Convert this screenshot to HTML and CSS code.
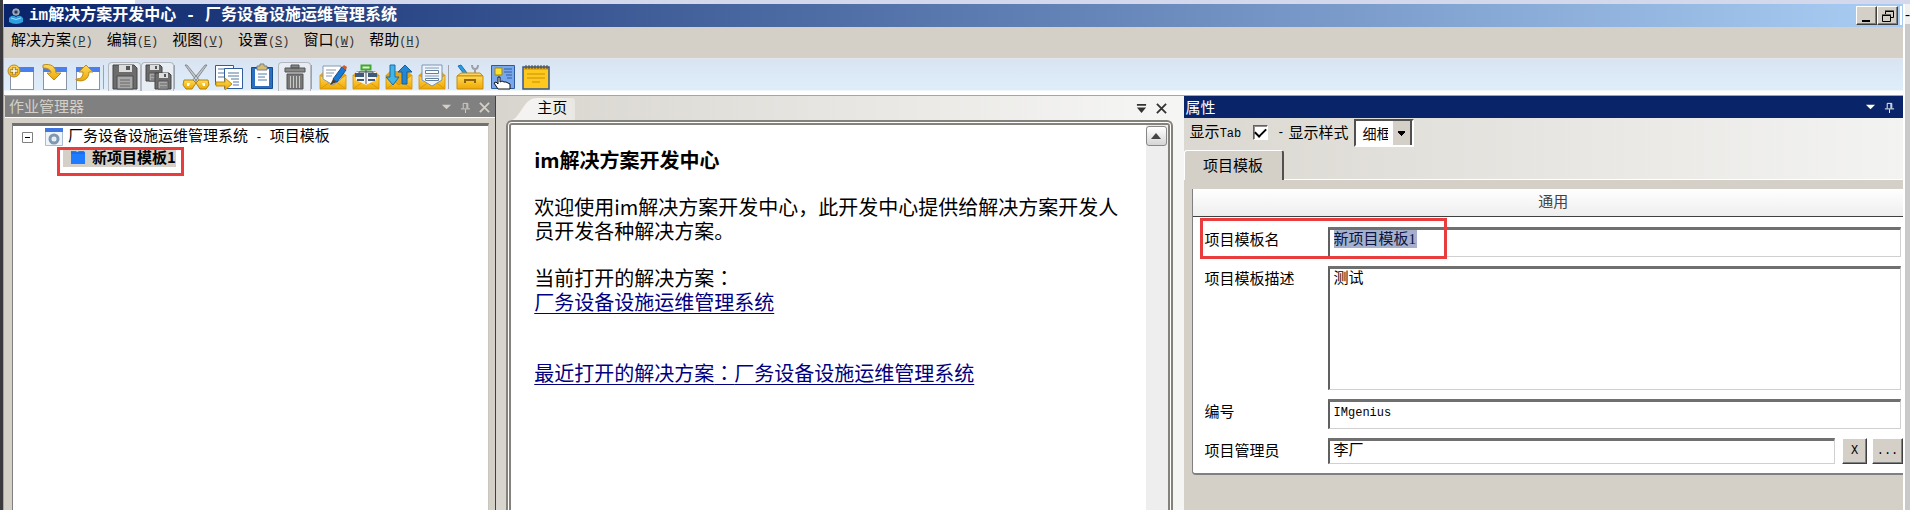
FILE: index.html
```html
<!DOCTYPE html>
<html lang="zh-CN">
<head>
<meta charset="utf-8">
<title>im解决方案开发中心 - 厂务设备设施运维管理系统</title>
<link rel="stylesheet" href="styles.css">
</head>
<body>
<svg width="0" height="0" class="defs" aria-hidden="true">
  <defs>
    <linearGradient id="gold" x1="0" y1="0" x2="0" y2="1"><stop offset="0" stop-color="#ffd95a"/><stop offset="1" stop-color="#f0a800"/></linearGradient>
    <symbol id="win" viewBox="0 0 28 26"><rect x="3.500" y="4.500" width="23" height="21" fill="#fff" stroke="#8a94a6"/><path d="M3 3h24v5H3z" fill="#4a80ee"/></symbol>
    <symbol id="env" viewBox="0 0 28 26"><path d="M1 11l4-4h18l4 4v12H1z" fill="#e8a414"/><path d="M1 11l13 10 13-10v14H1z" fill="url(#gold)" stroke="#d18f00" stroke-width=".8"/><path d="M1 25l10-7M27 25l-10-7" stroke="#d89b10" fill="none"/></symbol>
  </defs>
</svg>
<div class="screen">
  <div class="backdrop"></div>
  <div class="window">
    <header class="titlebar">
      <svg class="app-icon" viewBox="0 0 16 16"><circle cx="8" cy="4" r="2.600" fill="none" stroke="#a9b3c0" stroke-width="2"/><path d="M8 0v8M4 4h8M5 1l6 6M11 1L5 7" stroke="#8b95a3" stroke-width="1"/><circle cx="8" cy="4" r="1.500" fill="#26365c"/><path d="M1 10q3-4 7-1 4-3 7 1v4q-7 4-14 0z" fill="#2e9fe0"/><path d="M3 10q5 3 10 0" stroke="#9fdcff" fill="none"/></svg>
      <h1>im解决方案开发中心 - 厂务设备设施运维管理系统</h1>
      <div class="caption-buttons">
        <button class="cap" aria-label="最小化"><svg viewBox="0 0 16 14"><path d="M3 12h8" stroke="#000" stroke-width="2"/></svg></button>
        <button class="cap" aria-label="还原"><svg viewBox="0 0 16 14" fill="none" stroke="#000"><path d="M5.500 5V2.500h8v6H11M5 2h9M2.500 6.500h8v6h-8zM2 6h9"/></svg></button>
      </div>
    </header>
    <nav class="menubar">
      <button>解决方案<span class="en">(<u>P</u>)</span></button><button>编辑<span class="en">(<u>E</u>)</span></button><button>视图<span class="en">(<u>V</u>)</span></button><button>设置<span class="en">(<u>S</u>)</span></button><button>窗口<span class="en">(<u>W</u>)</span></button><button>帮助<span class="en">(<u>H</u>)</span></button>
    </nav>
    <div class="toolbar" role="toolbar">
      <button aria-label="新建"><svg viewBox="0 0 28 26"><use href="#win"/><circle cx="7" cy="7" r="6" fill="url(#gold)" stroke="#b98b1c"/><path d="M7 3v8M3 7h8" stroke="#8d6710" stroke-width="3"/><path d="M7 3.500v7M3.500 7h7" stroke="#fff" stroke-width="1.500"/></svg></button>
      <button aria-label="打开"><svg viewBox="0 0 28 26"><use href="#win"/><path d="M3 1c8-2 13 2 13 8h5l-7 7-7-7h4c0-3-3-5-8-5z" fill="url(#gold)" stroke="#b98b1c"/></svg></button>
      <button aria-label="导出"><svg viewBox="0 0 28 26"><use href="#win"/><path d="M3 15c6 0 7-3 7-7H6l7-7 7 7h-4c0 6-5 11-13 8z" fill="url(#gold)" stroke="#b98b1c"/></svg></button>
      <i class="sep"></i>
      <button class="idle" aria-label="保存"><svg viewBox="0 0 28 26"><path d="M2 1h21l3 3v21H2z" fill="#6c6c6c" stroke="#454545"/><path d="M8 1h13v7H8z" fill="#ddd"/><path d="M15 2h4v4h-4z" fill="#555"/><path d="M6 12h16v13H6z" fill="#a8a8a8" stroke="#4c4c4c"/><path d="M9 16h10M9 19h10M9 22h10" stroke="#666"/></svg></button>
      <button class="idle" aria-label="全部保存"><svg viewBox="0 0 28 26"><g id="disk"><path d="M2 1h14l2 2v14H2z" fill="#6c6c6c" stroke="#454545"/><path d="M6 1h9v5H6z" fill="#ddd"/><path d="M11 2h2v3h-2z" fill="#555"/><path d="M5 9h10v8H5z" fill="#a8a8a8" stroke="#555"/><path d="M7 12h7M7 15h7" stroke="#666"/></g><use href="#disk" x="9" y="8"/></svg></button>
      <i class="sep"></i>
      <button aria-label="剪切"><svg viewBox="0 0 28 26"><path d="M3 1l2 0 13 16-2 2zM25 1l-2 0L10 17l2 2z" fill="#c4c8cc" stroke="#75797d" stroke-width=".8"/><path d="M2 16h9l3 3-4 6H4l-3-4zM26 16h-9l-3 3 4 6h6l3-4z" fill="url(#gold)" stroke="#b28407"/><path d="M5 19h3l-1 3H5zM23 19h-3l1 3h2z" fill="#fff"/></svg></button>
      <button aria-label="复制"><svg viewBox="0 0 28 26"><path d="M.5 1.500h18v19H.5z" fill="#fff" stroke="#315d9c"/><path d="M3 5h11M3 9h6M3 13h6" stroke="#56779f"/><path d="M9.500 4.500h18v20h-18z" fill="#fff" stroke="#315d9c"/><path d="M13 9h11M13 12h11M16 15h8M18 18h6M18 21h6" stroke="#56779f"/><path d="M1 18h9v-4l7 6-7 6v-4H1z" fill="url(#gold)" stroke="#c08f08"/></svg></button>
      <button aria-label="粘贴"><svg viewBox="0 0 28 26"><path d="M3.500 3.500h21v21h-21z" fill="#2c6fc0" stroke="#174a8c"/><path d="M7 5h14v17H7z" fill="#fff"/><path d="M9 2h3V0h4v2h3v4H9z" fill="#d7bd71" stroke="#77808d"/><path d="M10 10h9M10 13h7M10 16h9" stroke="#527aa9"/></svg></button>
      <button class="idle" aria-label="删除"><svg viewBox="0 0 28 26"><path d="M4 4h20v4H4zM10 1h8v3h-8z" fill="#888" stroke="#555"/><path d="M6 10h16v15H6z" fill="#777" stroke="#555"/><path d="M9.500 12v12M12.500 12v12M15.500 12v12M18.500 12v12" stroke="#c9c9c9"/></svg></button>
      <i class="sep"></i>
      <button aria-label="编辑"><svg viewBox="0 0 28 26"><use href="#env"/><path d="M4 2h18v13l-8 6-10-6z" fill="#fff" stroke="#8799ae"/><path d="M7 6h10M7 9h8M7 12h6" stroke="#8799ae"/><path d="M23 3l4 3-9 12-4-3z" fill="#1978d4" stroke="#145191"/><path d="M14 15l4 3-7 3z" fill="#473c34"/><path d="M23 3l4 3 1-3-3-2z" fill="#d95a25"/></svg></button>
      <button aria-label="结构"><svg viewBox="0 0 28 26"><use href="#env"/><path d="M4 8h20v8l-10 5-10-5z" fill="#f4f6f8"/><path d="M9.500 1.500h9v4h-9z" fill="#dff7d5" stroke="#42a82b" stroke-width="2"/><path d="M14 6v14M7 10V8h14v2" stroke="#4c5560" fill="none"/><path d="M3 9h9v4H3zM16 9h9v4h-9z" fill="#41597a"/><path d="M5 15h7v2H5zM16 15h7v2h-7z" fill="#41597a"/></svg></button>
      <button aria-label="同步"><svg viewBox="0 0 28 26"><use href="#env"/><path d="M5 1h5v12h4l-6 8-7-8h4z" fill="#43b4e7" stroke="#176da8"/><path d="M17 20V8h-4l7-7 7 7h-5v12z" fill="#2487d2" stroke="#145f9e"/></svg></button>
      <button aria-label="表单"><svg viewBox="0 0 28 26"><use href="#env"/><path d="M4 1h20v15l-10 6-10-6z" fill="#edf4fc" stroke="#7d95b1"/><path d="M7 4h14M7 12h14" stroke="#839bb6"/><path d="M7.500 6.500h13v3h-13zM7.500 14.500h13v2h-13z" fill="#fff" stroke="#65809f"/></svg></button>
      <i class="sep"></i>
      <button aria-label="工具箱"><svg viewBox="0 0 28 26"><path d="M2 2l3-1 6 8-3 1z" fill="#2c9be4" stroke="#1874b8"/><path d="M16 1q0 4 3 4t3-4M19 5v6" fill="none" stroke="#9aa0a5" stroke-width="2"/><path d="M1 12l4-3h19l3 3z" fill="#ffd35c" stroke="#c58d0d"/><path d="M1 12h26v13H1z" fill="url(#gold)" stroke="#c58d0d"/><path d="M8 15h12v4H8z" fill="#8d6710"/><path d="M10 17h8v2h-8z" fill="#ffc21f"/></svg></button>
      <button aria-label="名片"><svg viewBox="0 0 28 26"><path d="M2.500 1.500h23v23h-23z" fill="#78a7ee" stroke="#315a9c"/><path d="M6 4h7v7H6z" fill="#ffe227" stroke="#9c8916"/><path d="M15 5h8M15 8h8M17 11h6M18 14h5" stroke="#335b9c"/><path d="M9 25l-4-6 2-1 2 2v-7h2v5l2-1 2 1 2 0 2 1 2 1v5z" fill="#fff" stroke="#111"/></svg></button>
      <button aria-label="便笺"><svg viewBox="0 0 28 26"><path d="M1 3h26v22H1z" fill="#ffc81e" stroke="#35568c" stroke-width="1.500"/><path d="M2 4h24v2H2z" fill="#e2aa10"/><path d="M4 1v4M7 1v4M10 1v4M13 1v4M16 1v4M19 1v4M22 1v4M25 1v4" stroke="#5f4c1a"/><path d="M5 10h18M5 14h18M10 18h8" stroke="#c88f09"/></svg></button>
    </div>
    <main class="panes">
      <section class="pane jobs">
        <h2 class="pane-title">作业管理器
          <span class="tools"><svg viewBox="0 0 12 12"><path d="M1 3h10L6 8z"/></svg><svg viewBox="0 0 12 12"><path d="M3.500 7V1.500h5V7M7.500 2v5M1 7.500h10M6 8v4" fill="none" stroke="currentColor"/></svg><svg viewBox="0 0 12 12"><path d="M1 1l10 10M11 1L1 11" stroke="currentColor" stroke-width="2"/></svg></span>
        </h2>
        <div class="tree" role="tree">
          <div class="node" role="treeitem" aria-expanded="true">
            <svg class="expander" viewBox="0 0 11 11"><path d="M.5.500h10v10H.5z" fill="#fff" stroke="#808080"/><path d="M3 5.500h5" stroke="#000"/></svg>
            <svg class="sheet" viewBox="0 0 18 18"><path d="M.5.500h17v17H.5z" fill="#eef4fb" stroke="#a9bcd0"/><path d="M0 0h18v4H0z" fill="#3f76e0"/><circle cx="9" cy="11" r="4" fill="none" stroke="#8098ad" stroke-width="3"/><circle cx="9" cy="11" r="2" fill="#e3edf6"/></svg>
            <span>厂务设备设施运维管理系统<span class="en dash"> - </span>项目模板</span>
          </div>
          <div class="node child" role="treeitem">
            <span class="selected"><svg viewBox="0 0 16 16"><path d="M1 2h5l1 1 2-1h5l1 2v11H1z" fill="#1f7bff"/><path d="M1 4h14" stroke="#1763d6"/></svg>新项目模板1</span>
          </div>
        </div>
      </section>
      <section class="pane home">
        <div class="tabstrip">
          <svg class="slope" viewBox="0 0 22 22" preserveAspectRatio="none"><path d="M0 22C8 19 10 0 22 0v22z" fill="#f4f3f1"/></svg><button class="tab">主页</button>
          <span class="tools"><svg viewBox="0 0 12 12"><path d="M1 1h10v2H1zM1 5h10L6 11z"/></svg><svg viewBox="0 0 12 12"><path d="M1 1l10 10M11 1L1 11" stroke="currentColor" stroke-width="2"/></svg></span>
        </div>
        <div class="doc">
          <article>
            <h3>im解决方案开发中心</h3>
            <p>欢迎使用im解决方案开发中心，此开发中心提供给解决方案开发人员开发各种解决方案。</p>
            <p>当前打开的解决方案<span class="colon" lang="zh-TW">：</span><br><a href="#current">厂务设备设施运维管理系统</a></p>
            <p class="recent"><a href="#recent">最近打开的解决方案<span class="colon" lang="zh-TW">：</span>厂务设备设施运维管理系统</a></p>
          </article>
          <div class="scroll"><button aria-label="向上滚动"><svg viewBox="0 0 10 6"><path d="M0 6l5-6 5 6z" fill="#444"/></svg></button></div>
        </div>
      </section>
      <section class="pane props">
        <h2 class="pane-title active">属性
          <span class="tools"><svg viewBox="0 0 12 12"><path d="M1 3h10L6 8z"/></svg><svg viewBox="0 0 12 12"><path d="M3.500 7V1.500h5V7M7.500 2v5M1 7.500h10M6 8v4" fill="none" stroke="currentColor"/></svg></span>
        </h2>
        <div class="options">
          <label for="showtab">显示<span class="en">Tab</span></label><input type="checkbox" id="showtab" checked><span class="divider en">-</span>
          <label for="style">显示样式</label><select id="style"><option>细框</option></select>
        </div>
        <div class="prop-tabs"><button>项目模板</button></div>
        <div class="prop-body">
          <form class="card">
            <h3>通用</h3>
            <div class="field marked"><label for="name">项目模板名</label><div class="box"><input id="name" class="ghost" value="新项目模板1"></div></div>
            <div class="field tall"><label for="desc">项目模板描述</label><textarea id="desc" class="box">测试</textarea></div>
            <div class="field"><label for="code">编号</label><input id="code" class="box en" value="IMgenius"></div>
            <div class="field short"><label for="owner">项目管理员</label><input id="owner" class="box" value="李厂"><button type="button" class="clear en">X</button><button type="button" class="more en">...</button></div>
          </form>
        </div>
      </section>
    </main>
  </div>
  <aside class="outer-scroll"><span>-</span></aside>
</div>
</body>
</html>
```

FILE: styles.css
```css
*, *::after { box-sizing: border-box; }
body { margin: 0; font: 15px/20px "Liberation Serif", "Noto Sans CJK SC", sans-serif; color: #000; overflow: hidden; }
button, input, select, textarea { font: inherit; color: inherit; margin: 0; border-radius: 0; }
button { border: 0; background: none; padding: 0; }
h1, h2, h3, p { margin: 0; font-weight: 400; }
h1, h2, h3 { font-size: 15px; }
.en { font-family: "Liberation Mono", monospace; font-size: 12px; }
.defs { position: absolute; }
.screen { min-height: 100vh; display: grid; grid-template-columns: 4px minmax(0, 1fr) 7px; grid-template-rows: 4px minmax(0, 1fr); background: linear-gradient(90deg, #3a3a3e 3px, #a5a5a5 3px, #a5a5a5 4px, #d4d0c8 4px); }
.backdrop { grid-column: 1 / -1; background: linear-gradient(90deg, #3a3a3e 3px, #fff 3px, #fff 135px, #d3d8ec 135px); }
.window { grid-column: 2; display: flex; flex-direction: column; background: #d4d0c8; }
.outer-scroll { grid-column: 3; border-left: 2px solid #fff; background: #c9c9c9; overflow: hidden; }
.outer-scroll span { display: block; height: 20px; background: #f0f0f0; text-align: right; line-height: 20px; }

.titlebar { display: flex; align-items: center; height: 23px; padding: 0 1px 0 4px; gap: 5px; background: linear-gradient(90deg, #0a246a, #a6caf0 98%); color: #fff; }
.app-icon { width: 16px; height: 16px; }
.titlebar h1 { font: bold 16px/22px "Liberation Mono", "Noto Sans CJK SC", monospace; flex: 1; white-space: nowrap; }
.caption-buttons { display: flex; border-right: 2px solid #fff; padding-right: 2px; }
.cap { width: 21px; height: 19px; background: #d4d0c8; border: 1px solid; border-color: #fff #404040 #404040 #fff; box-shadow: inset -1px -1px #808080; display: grid; place-items: center; }
.cap svg { width: 16px; height: 14px; }

.menubar { display: flex; align-items: flex-start; gap: 14px; height: 32px; padding: 3px 7px; border-bottom: 1px solid #e4e6ec; }
.menubar button { white-space: nowrap; }
.menubar .en { color: #333; }
.toolbar { display: flex; height: 36px; padding: 3px 0 4px; background: linear-gradient(#d9e4f3, #dfedfa 31px, #fff 32px); }
.toolbar button { width: 33px; height: 29px; display: grid; place-items: center; }
.toolbar .idle { background: #e8edf3; border: 1px solid #b5b9bf; border-bottom: 0; border-radius: 4px 4px 0 0; }
.toolbar svg { width: 28px; height: 26px; overflow: visible; }
.sep { width: 5px; border-left: 1px solid #9ba3af; margin: 3px 0 2px; }

.panes { flex: 1; display: grid; grid-template-columns: 492fr 686fr 720fr; border-top: 1px solid #a5a5a5; }
.pane { min-width: 0; display: flex; flex-direction: column; }
.pane-title { display: flex; justify-content: space-between; align-items: center; height: 22px; padding: 1px 5px 0 4px; background: #808080; color: #d4d0c8; border-bottom: 1px solid #fff; }
.pane-title.active { background: #0a246a; color: #fff; border: 0; padding: 1px 8px 0 2px; }
.tools { display: flex; gap: 8px; align-items: center; }
.tools svg { width: 11px; height: 11px; fill: currentColor; }
.jobs { padding-left: 1px; border-right: 1px solid #404040; }
.jobs .tree { flex: 1; margin: 5px 6px 0 7px; background: #fff; border: 1px solid #808080; border-top: 3px solid #707070; border-bottom: 0; border-right-color: #c9c6bf; padding-top: 1px; }
.node { display: flex; align-items: center; height: 20px; white-space: nowrap; }
.expander { width: 11px; height: 11px; margin: 0 12px 0 9px; }
.sheet { width: 18px; height: 18px; margin-right: 5px; }
.dash { white-space: pre; }
.child { padding-left: 50px; }
.selected { position: relative; display: flex; align-items: center; gap: 6px; height: 20px; padding: 0 0 0 7px; background: #d4d0c8; font-family: "Noto Sans CJK SC", sans-serif; font-weight: 700; }
.selected svg { width: 16px; height: 16px; }
.selected::after { content: ""; position: absolute; inset: 0 -8px -9px -6px; border: 3px solid #e93c3c; }

.home { padding: 0 10px; background: linear-gradient(90deg, #d8d5ce, #f5f5f4 96%); }
.tabstrip { display: flex; align-items: flex-end; height: 24px; padding: 2px 6px 0; }
.slope { width: 25px; height: 22px; }
.tab { height: 22px; padding: 0 8px 3px 0; background: linear-gradient(90deg, #f4f3f1, #e9e7e2); border-radius: 0 3px 0 0; }
.tabstrip .tools { margin: 0 0 6px auto; gap: 9px; color: #333; }
.doc { flex: 1; display: flex; background: #fff; border: 5px double #85827c; border-bottom: 0; border-radius: 6px 6px 0 0; }
article { flex: 1; min-width: 0; padding: 23px 23px 0; font: 300 20px/24px "Noto Sans CJK SC", sans-serif; }
article h3 { font-size: 20px; font-weight: 700; margin-bottom: 23px; }
article p { margin-bottom: 23px; }
article .recent { padding-top: 24px; }
.colon { font-family: "Noto Sans CJK TC", sans-serif; }
a { color: #000080; text-underline-offset: 3px; text-decoration-thickness: 1px; }
.scroll { width: 22px; background: #eee; padding-top: 1px; }
.scroll button { width: 21px; height: 20px; border: 1px solid #888; border-radius: 3px; background: linear-gradient(#fff, #d5d5d5); display: grid; place-items: center; }
.scroll svg { width: 10px; height: 6px; }

.props { border-left: 1px solid #f5f5f5; background: linear-gradient(90deg, #dbd8d1, #f3f3f2); }
.options { display: flex; align-items: center; height: 32px; padding: 0 6px; white-space: nowrap; }
.options label, .divider { padding-bottom: 3px; }
.options input { appearance: none; width: 15px; height: 15px; margin: 0 9px 4px 12px; border: 1px solid; border-color: #606060 #fff #fff #606060; box-shadow: inset 1px 1px #909090; background: #fff; display: grid; place-items: center; }
.options input::after { content: ""; width: 11px; height: 7px; border: solid #000; border-width: 0 0 2px 2px; transform: translateY(-1px) rotate(-45deg); }
.divider { margin-right: 4px; }
.options select { appearance: none; width: 60px; height: 28px; margin: 0 0 2px 6px; padding: 3px 24px 0 6px; font-size: 14px; border: 2px solid; border-color: #505050 #fff #fff #505050; background: linear-gradient(#000, #000) 42px 10px / 7px 2px no-repeat, linear-gradient(#000, #000) 43px 12px / 5px 1px no-repeat, linear-gradient(#000, #000) 44px 13px / 3px 1px no-repeat, linear-gradient(#000, #000) 45px 14px / 1px 1px no-repeat, linear-gradient(90deg, #fff 37px, #d4d0c8 37px, #d4d0c8 54px, #505050 54px); }
.prop-tabs { display: flex; border-bottom: 1px solid #fff; height: 30px; }
.prop-tabs button { width: 100px; height: 30px; background: #d4d0c8; border: 1px solid #fff; border-right: 2px solid #505050; border-bottom: 0; border-radius: 3px 3px 0 0; }
.prop-body { flex: 1; background: #d4d0c8; padding: 9px 0 0 8px; }
.card { background: #fff; border: 1px solid #808080; border-width: 0 0 2px 1px; border-radius: 0 0 0 4px; padding-bottom: 9px; }
.card h3 { height: 28px; line-height: 27px; padding-left: 11px; text-align: center; color: #444; background: linear-gradient(#fff, #eee); border-bottom: 1px solid #404040; margin-bottom: 10px; }
.field { position: relative; display: flex; height: 30px; margin: 0 2px 9px 12px; }
.field label { width: 123px; flex: none; padding-top: 3px; }
.box { flex: 1; min-width: 0; border: 1px solid #d0d0d0; border-top: 3px solid #707070; border-left: 2px solid #606060; padding: 0 4px 4px; background: #fff; resize: none; outline: 0; line-height: 18px; }
.ghost { width: 83px; height: 18px; border: 0; padding: 0; background: #a6b0cd; color: #0a1440; display: block; }
.tall { height: 124px; }
.short { height: 26px; margin: 0 0 0 12px; }
.marked::after { content: ""; position: absolute; left: -5px; top: -9px; width: 247px; height: 41px; border: 3px solid #e93c3c; }
.clear, .more { background: #d4d0c8; border: 1px solid; border-color: #fff #404040 #404040 #fff; box-shadow: inset -1px -1px #808080; margin-left: 7px; width: 25px; }
.more { width: 31px; margin-left: 5px; }
```
